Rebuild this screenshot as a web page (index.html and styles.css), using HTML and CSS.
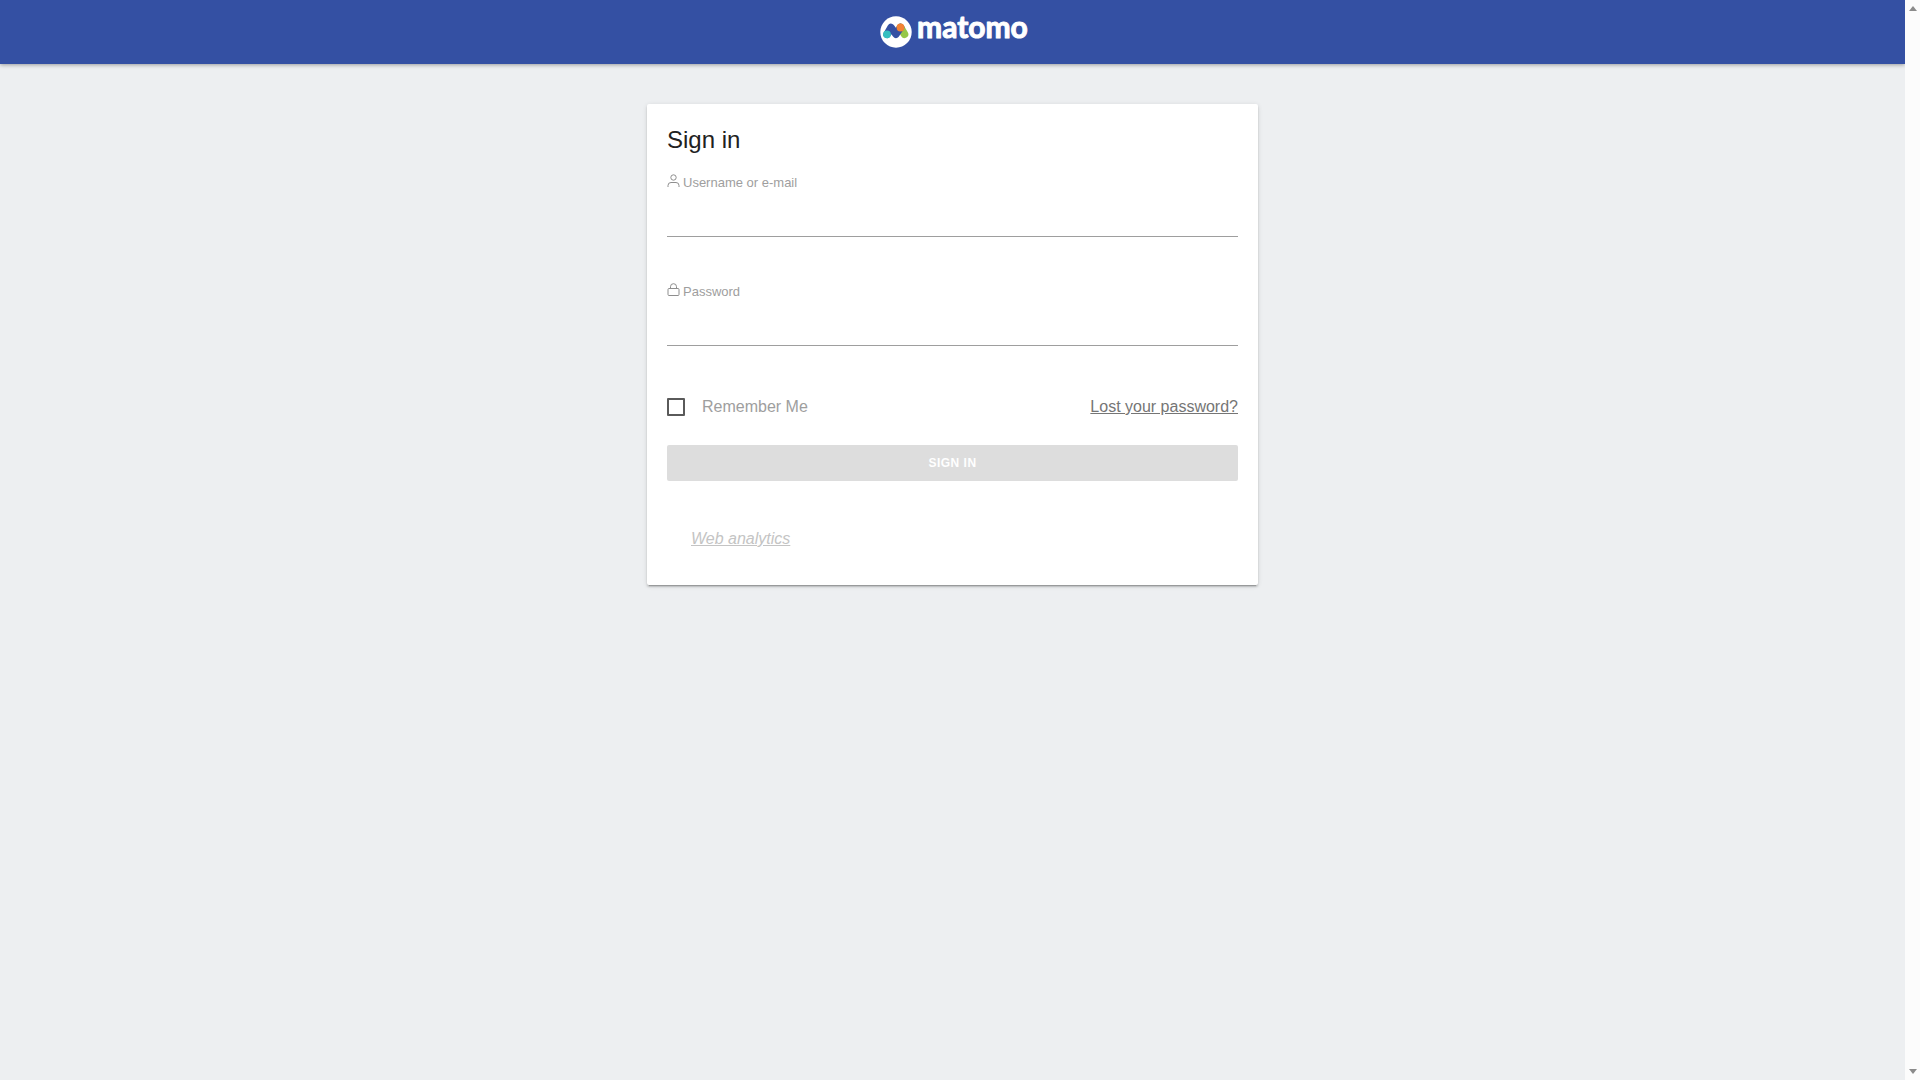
FILE: index.html
```html
<!DOCTYPE html>
<html lang="en">
<head>
<meta charset="UTF-8">
<title>Sign in - Matomo</title>
<meta name="viewport" content="width=device-width, initial-scale=1">
<link rel="stylesheet" href="styles.css">
</head>
<body>
  <div class="page">
    <header class="navbar">
      <a class="brand" href="#" aria-label="Matomo">
        <svg class="logo" viewBox="0 0 146 32">
          <circle cx="16" cy="16" r="15.700" fill="#fff"/>
          <path d="M20.500 11.500L24.500 18.300" stroke="#95c748" stroke-width="7.600" stroke-linecap="round"/>
          <path d="M7 18.300L11 11.500L16 18.300L20.500 11.500" fill="none" stroke="#3450a3" stroke-width="7.400" stroke-linecap="round" stroke-linejoin="round"/>
          <circle cx="7" cy="18.300" r="3.900" fill="#35bfc0"/>
          <circle cx="20.500" cy="11.500" r="3.900" fill="#f38334"/>
          <text class="logo-text" x="37" y="22">matomo</text>
        </svg>
      </a>
    </header>

    <main class="card">
      <h1>Sign in</h1>
      <form>
        <div class="field">
          <label for="login">
            <svg class="icon" viewBox="0 0 13 13" aria-hidden="true"><circle cx="6.500" cy="3.500" r="2.700"/><path d="M1 13v-1.500a3 3 0 0 1 3-3h5a3 3 0 0 1 3 3V13"/></svg>
            Username or e-mail
          </label>
          <input type="text" id="login">
        </div>
        <div class="field">
          <label for="password">
            <svg class="icon" viewBox="0 0 13 13" aria-hidden="true"><rect x="1" y="5.500" width="11" height="7" rx="1"/><path d="M3.500 5.500V3.700a3 3 0 0 1 6 0v1.800"/></svg>
            Password
          </label>
          <input type="password" id="password">
        </div>
        <div class="options">
          <label class="remember" for="remember"><input type="checkbox" id="remember">Remember Me</label>
          <a class="lost" href="#">Lost your password?</a>
        </div>
        <button class="submit" type="submit" disabled>Sign in</button>
      </form>
      <p class="tagline"><a href="#">Web analytics</a></p>
    </main>
  </div>

  <!-- Scrollbar -->
  <div class="scrollbar" aria-hidden="true">
    <span class="arrow up"></span>
    <span class="arrow down"></span>
  </div>
</body>
</html>
```
FILE: styles.css
```css
* { box-sizing: border-box; margin: 0; padding: 0; }

body {
  display: flex;
  min-height: 100vh;
  font-family: "Liberation Sans", Arial, sans-serif;
  font-size: 16px;
  background: #edeff1;
  color: #212121;
}
.page { flex: 1; }

/* Header */
.navbar {
  display: flex;
  justify-content: center;
  align-items: center;
  height: 64px;
  background: #3450a3;
  box-shadow: 0 1px 4px rgba(0, 0, 0, 0.35);
}
.brand { display: block; }
.logo {
  display: block;
  width: 146px;
  height: 32px;
  overflow: visible;
}
.logo-text {
  font-family: Lato, sans-serif;
  font-size: 30px;
  font-weight: 700;
  fill: #fff;
  stroke: #fff;
  stroke-linejoin: round;
}

/* Card */
.card {
  max-width: 611px;
  margin: 40px auto;
  padding: 20px 20px 34px;
  background: #fff;
  border-radius: 2px;
  box-shadow: 0 2px 2px rgba(0, 0, 0, 0.14), 0 1px 5px rgba(0, 0, 0, 0.12), 0 3px 1px -2px rgba(0, 0, 0, 0.2);
}
h1 {
  font-size: 24px;
  font-weight: 400;
  line-height: 32px;
  margin-bottom: 16px;
}

/* Form */
.field { margin-bottom: 44px; }
.field label {
  display: flex;
  align-items: baseline;
  gap: 3px;
  font-size: 13px;
  line-height: 22px;
  color: #9e9e9e;
}
.icon {
  width: 13px;
  height: 13px;
  margin-bottom: -1px;
  fill: none;
  stroke: #8e8e8e;
}
.field input {
  display: block;
  width: 100%;
  height: 43px;
  border: 0;
  border-bottom: 1px solid #9e9e9e;
  background: transparent;
  font: inherit;
  outline: none;
}
.options {
  display: flex;
  justify-content: space-between;
  align-items: center;
  margin: 48px 0 25px;
  line-height: 26px;
}
.remember {
  display: flex;
  align-items: center;
  gap: 17px;
  color: #9e9e9e;
}
.remember input {
  appearance: none;
  width: 18px;
  height: 18px;
  border: 2px solid #5a5a5a;
  border-radius: 1px;
}
.remember input:checked { background: #3450a3; }
.lost { color: #757575; }
.submit {
  display: block;
  width: 100%;
  height: 36px;
  border: 0;
  border-radius: 2px;
  background: #ddd;
  color: #fff;
  font: bold 12px "Liberation Sans", Arial, sans-serif;
  letter-spacing: 0.5px;
  text-transform: uppercase;
}
.tagline {
  margin-top: 46px;
  padding: 0 24px;
  font-style: italic;
  line-height: 24px;
}
.tagline a { color: #c4c4c4; }

/* Scrollbar */
.scrollbar {
  display: flex;
  flex-direction: column;
  justify-content: space-between;
  align-items: center;
  width: 15px;
  padding: 6px 0;
  background: #fcfcfc;
}
.arrow {
  border: 4px solid transparent;
}
.arrow.up {
  border-top: 0;
  border-bottom: 5px solid #8b8b8b;
}
.arrow.down {
  border-bottom: 0;
  border-top: 5px solid #8b8b8b;
}
```
